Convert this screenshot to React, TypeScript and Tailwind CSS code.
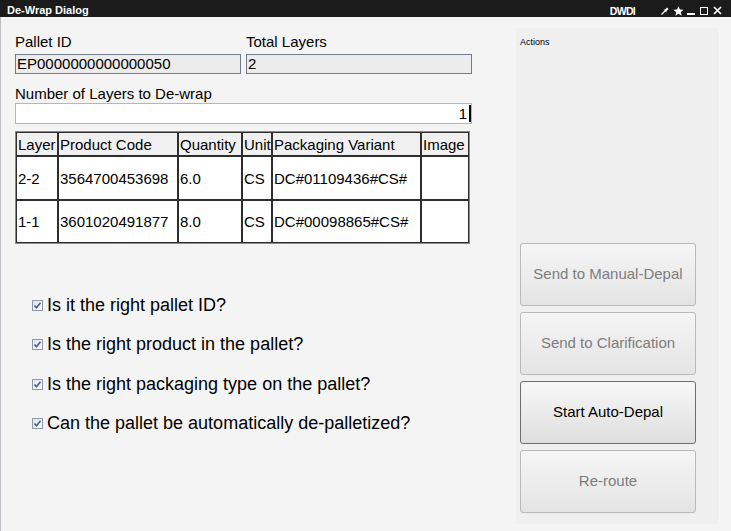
import React from "react";

const rows = [
  { layer: "2-2", code: "3564700453698", qty: "6.0", unit: "CS", variant: "DC#01109436#CS#" },
  { layer: "1-1", code: "3601020491877", qty: "8.0", unit: "CS", variant: "DC#00098865#CS#" },
];

const questions = [
  "Is it the right pallet ID?",
  "Is the right product in the pallet?",
  "Is the right packaging type on the pallet?",
  "Can the pallet be automatically de-palletized?",
];

const Check = () => (
  <div className="w-[11px] h-[11px] border border-[#8e9aa8] bg-gradient-to-br from-[#dfe3ea] to-[#fbfbfc] flex items-center justify-center shrink-0">
    <svg width="9" height="9" viewBox="0 0 9 9">
      <path d="M1.5 4.5 L3.5 6.8 L7.5 1.8" fill="none" stroke="#4a5c94" strokeWidth="1.6" />
    </svg>
  </div>
);

const ActionButton = ({ label, enabled }: { label: string; enabled?: boolean }) => (
  <button
    className={
      enabled
        ? "w-[176px] h-[63px] rounded-[3px] border border-[#6e6e6e] bg-gradient-to-b from-[#f8f8f8] to-[#dedede] text-[15px] text-black"
        : "w-[176px] h-[63px] rounded-[3px] border border-[#b9b9b9] bg-gradient-to-b from-[#f5f5f5] to-[#e4e4e4] text-[15px] text-[#7d7d7d]"
    }
  >
    {label}
  </button>
);

const cell = "border border-[#2e2e2e] px-[1px] flex items-center text-[15px] leading-[17px] whitespace-nowrap overflow-hidden";

export default function App() {
  return (
    <div className="w-[731px] h-[531px] flex flex-col bg-[#f4f4f4] font-['Liberation_Sans',Arial,sans-serif] text-black overflow-hidden">
      {/* title bar */}
      <div className="h-[17px] shrink-0 bg-[#1b1b1b] flex items-end pl-[7px] pr-[9px] text-white">
        <span className="text-[11px] font-bold leading-[13px]">De-Wrap Dialog</span>
        <span className="ml-auto text-[10.5px] font-bold leading-[12px] tracking-[-0.7px]">DWDI</span>
        <div className="flex items-end ml-[26px] mb-[2px]">
          <svg width="8" height="8" viewBox="0 0 8 8">
            <path d="M0.5 7.5 L4 4" stroke="white" strokeWidth="1.2" />
            <path d="M2.6 2.8 L5.2 5.4 L5.6 3.9 L7.5 2 L6 0.5 L4.1 2.4 Z" fill="white" />
          </svg>
          <svg width="11" height="10" viewBox="0 0 24 22" className="ml-[4px] mb-[-1px]">
            <path d="M12 0.5 L15.1 7.6 L23 8.3 L17 13.5 L18.8 21.3 L12 17.2 L5.2 21.3 L7 13.5 L1 8.3 L8.9 7.6 Z" fill="white" />
          </svg>
          <div className="w-[8px] h-[2px] bg-white ml-[3px]" />
          <div className="w-[8px] h-[8px] border-[1.5px] border-white ml-[5px]" />
          <svg width="9" height="9" viewBox="0 0 9 9" className="ml-[5px]">
            <path d="M1 1 L8 8 M8 1 L1 8" stroke="white" strokeWidth="1.7" />
          </svg>
        </div>
      </div>

      <div className="flex flex-1 min-h-0 border-l border-[#bcc0c5]">
        {/* left content */}
        <div className="w-[515px] shrink-0 pl-[14px] pt-[16px] flex flex-col">
          <div className="flex gap-[5px]">
            <div className="w-[226px]">
              <div className="text-[15px] leading-[17px]">Pallet ID</div>
              <div className="mt-[4px] h-[20px] border border-[#6f7b8b] bg-[#ececec] px-[1px] text-[15px] leading-[18px]">
                EP0000000000000050
              </div>
            </div>
            <div className="w-[226px]">
              <div className="text-[15px] leading-[17px]">Total Layers</div>
              <div className="mt-[4px] h-[20px] border border-[#6f7b8b] bg-[#ececec] px-[1px] text-[15px] leading-[18px]">
                2
              </div>
            </div>
          </div>

          <div className="mt-[11px] text-[15px] leading-[17px]">Number of Layers to De-wrap</div>
          <div className="mt-[1px] w-[457px] h-[21px] border border-[#f0b90c] bg-white flex items-center justify-end text-[15px] leading-[18px]">
            <span>1</span>
            <span className="w-[2px] h-[17px] bg-black ml-[2px]" />
          </div>

          <div className="mt-[7px] w-fit border border-[#8a8a8a]">
            <div className="grid grid-cols-[42px_120px_64px_30px_149px_48px] grid-rows-[24px_44px_43px]">
              <div className={cell + " bg-[#f0f0f0]"}>Layer</div>
              <div className={cell + " bg-[#f0f0f0]"}>Product Code</div>
              <div className={cell + " bg-[#f0f0f0]"}>Quantity</div>
              <div className={cell + " bg-[#f0f0f0]"}>Unit</div>
              <div className={cell + " bg-[#f0f0f0]"}>Packaging Variant</div>
              <div className={cell + " bg-[#f0f0f0]"}>Image</div>
              {rows.map((r) => (
                <React.Fragment key={r.layer}>
                  <div className={cell + " bg-white"}>{r.layer}</div>
                  <div className={cell + " bg-white"}>{r.code}</div>
                  <div className={cell + " bg-white"}>{r.qty}</div>
                  <div className={cell + " bg-white"}>{r.unit}</div>
                  <div className={cell + " bg-white"}>{r.variant}</div>
                  <div className={cell + " bg-white"}></div>
                </React.Fragment>
              ))}
            </div>
          </div>

          <div className="mt-[42px] flex flex-col">
            {questions.map((q) => (
              <div key={q} className="h-[39.3px] flex items-center pl-[17px] gap-[4px]">
                <Check />
                <span className="text-[18px] leading-[21px]">{q}</span>
              </div>
            ))}
          </div>
        </div>

        {/* actions panel */}
        <div className="w-[203px] shrink-0 mt-[11px] mb-[7px] bg-[#efefef] flex flex-col pl-[4px] pt-[9px] pb-[11px]">
          <div className="text-[9px] leading-[11px]">Actions</div>
          <div className="mt-auto flex flex-col gap-[6px]">
            <ActionButton label="Send to Manual-Depal" />
            <ActionButton label="Send to Clarification" />
            <ActionButton label="Start Auto-Depal" enabled />
            <ActionButton label="Re-route" />
          </div>
        </div>
      </div>
    </div>
  );
}
